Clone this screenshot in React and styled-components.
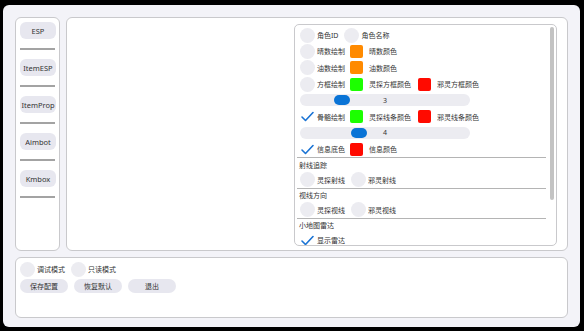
import React from 'react';
import styled, {createGlobalStyle} from 'styled-components';

const Global = createGlobalStyle`
    html, body { margin: 0; padding: 0; background: #000; }
    body {
        font-family: "Noto Sans", "Noto Sans CJK SC", sans-serif;
        font-size: 8px;
        color: #222;
    }
`;

const Window = styled.div`
    margin: 5px 0 0 3px;
    width: 577px;
    height: 322px;
    box-sizing: border-box;
    background: #f3f3f8;
    border-radius: 6px;
    padding: 12px 12px 9px 12px;
    display: flex;
    flex-direction: column;
    gap: 6px;
`;

const Top = styled.div`
    display: flex;
    gap: 6px;
    height: 234px;
`;

const Panel = styled.div`
    background: #fff;
    border: 1px solid #c9c9cc;
    border-radius: 6px;
    box-sizing: border-box;
`;

const Nav = styled(Panel)`
    width: 45px;
    padding: 4px 3px 0 4px;
    display: flex;
    flex-direction: column;
`;

const NavButton = styled.div`
    height: 17px;
    border-radius: 6px;
    background: #e7e7ef;
    display: flex;
    align-items: center;
    justify-content: center;
    font-size: 7.5px;
    color: #333;
    white-space: nowrap;
`;

const NavRule = styled.div`
    height: 2px;
    background: #a3a3a3;
    margin: 9px 1px 9px 0;
`;

const Content = styled(Panel)`
    flex: 1;
    display: flex;
    justify-content: flex-end;
    padding: 6px 10px 4px 0;
`;

const Box = styled.div`
    width: 263px;
    border: 1px solid #c9c9cc;
    border-radius: 5px;
    display: flex;
    box-sizing: border-box;
    overflow: hidden;
`;

const Scroll = styled.div`
    flex: 1;
    padding: 2px 0 0 2px;
`;

const ScrollTrack = styled.div`
    width: 8px;
    padding: 2px 0;
    display: flex;
    justify-content: center;
`;

const Thumb = styled.div`
    width: 4px;
    height: 173px;
    background: #c3c3c3;
    border-radius: 2px;
`;

const Row = styled.div`
    height: 16.3px;
    display: flex;
    align-items: center;
    padding-left: 3px;
    gap: ${p => p.$gap || 0}px;
`;

const GridRow = styled(Row)`
    display: grid;
    grid-template-columns: 50px 68px auto;
    align-items: center;
`;

const Item = styled.div`
    display: flex;
    align-items: center;
    white-space: nowrap;
`;

const Circle = styled.div`
    width: 15px;
    height: 15px;
    border-radius: 50%;
    background: #ececf1;
    margin-right: 2px;
    flex: none;
`;

const Check = styled.svg`
    width: 15px;
    height: 15px;
    margin-right: 2px;
    flex: none;
`;

const Swatch = styled.div`
    width: 13px;
    height: 13px;
    border-radius: 2px;
    background: ${p => p.$color};
    margin-right: 6px;
    flex: none;
`;

const Label = styled.span`
    font-size: 7px;
    color: #333;
`;

const Slider = styled.div`
    width: 170px;
    height: 12px;
    border-radius: 6px;
    background: #ececf1;
    position: relative;
    display: flex;
    align-items: center;
    justify-content: center;
    font-size: 7px;
    color: #333;
`;

const Knob = styled.div`
    position: absolute;
    top: 1px;
    width: 16px;
    height: 10px;
    border-radius: 5px;
    background: #0a74d6;
`;

const Rule = styled.div`
    height: 1px;
    background: #b4b4b4;
    margin: 0 2px 0 0;
`;

const Section = styled.div`
    height: 13px;
    display: flex;
    align-items: center;
    padding-left: 2px;
    font-size: 7px;
    color: #333;
`;

const Bottom = styled(Panel)`
    flex: 1;
    padding: 3px 4px;
    display: flex;
    flex-direction: column;
    gap: 2px;
`;

const Buttons = styled.div`
    display: flex;
    gap: 6px;
`;

const Button = styled.div`
    width: 48px;
    height: 14px;
    border-radius: 7px;
    background: #e7e7ef;
    display: flex;
    align-items: center;
    justify-content: center;
    font-size: 7px;
    color: #333;
`;

const Tick = () => (
    <Check viewBox="0 0 15 15">
        <path d="M2 8 L5.5 11.5 L13 3.5" fill="none" stroke="#1a73d4" strokeWidth="1.6" strokeLinecap="round" strokeLinejoin="round"/>
    </Check>
);

const Toggle = ({on, children}) => (
    <Item>{on ? <Tick/> : <Circle/>}<Label>{children}</Label></Item>
);

const Color = ({color, children}) => (
    <Item><Swatch $color={color}/><Label>{children}</Label></Item>
);

const Range = ({value}) => (
    <Row>
        <Slider>
            <Knob style={{left: ((value - 1) / 9) * 154}}/>
            {value}
        </Slider>
    </Row>
);

const ORANGE = '#ff8a00';
const GREEN = '#1cff00';
const RED = '#ff0a00';

const navs = ['ESP', 'ItemESP', 'ItemProp', 'Aimbot', 'Kmbox'];

export default function App() {
    return (
        <>
            <Global/>
            <Window>
                <Top>
                    <Nav>
                        {navs.map(n => (
                            <React.Fragment key={n}>
                                <NavButton>{n}</NavButton>
                                <NavRule/>
                            </React.Fragment>
                        ))}
                    </Nav>
                    <Content>
                        <Box>
                            <Scroll>
                                <Row $gap={6}>
                                    <Toggle>角色ID</Toggle>
                                    <Toggle>角色名称</Toggle>
                                </Row>
                                <GridRow>
                                    <Toggle>晴数绘制</Toggle>
                                    <Color color={ORANGE}>晴数颜色</Color>
                                </GridRow>
                                <GridRow>
                                    <Toggle>油数绘制</Toggle>
                                    <Color color={ORANGE}>油数颜色</Color>
                                </GridRow>
                                <GridRow>
                                    <Toggle>方框绘制</Toggle>
                                    <Color color={GREEN}>灵探方框颜色</Color>
                                    <Color color={RED}>邪灵方框颜色</Color>
                                </GridRow>
                                <Range value={3}/>
                                <GridRow>
                                    <Toggle on>骨骼绘制</Toggle>
                                    <Color color={GREEN}>灵探线条颜色</Color>
                                    <Color color={RED}>邪灵线条颜色</Color>
                                </GridRow>
                                <Range value={4}/>
                                <GridRow>
                                    <Toggle on>信息底色</Toggle>
                                    <Color color={RED}>信息颜色</Color>
                                </GridRow>
                                <Rule/>
                                <Section>射线追踪</Section>
                                <Row $gap={6}>
                                    <Toggle>灵探射线</Toggle>
                                    <Toggle>邪灵射线</Toggle>
                                </Row>
                                <Rule/>
                                <Section>视线方向</Section>
                                <Row $gap={6}>
                                    <Toggle>灵探视线</Toggle>
                                    <Toggle>邪灵视线</Toggle>
                                </Row>
                                <Rule/>
                                <Section>小地图雷达</Section>
                                <Row>
                                    <Toggle on>显示雷达</Toggle>
                                </Row>
                            </Scroll>
                            <ScrollTrack><Thumb/></ScrollTrack>
                        </Box>
                    </Content>
                </Top>
                <Bottom>
                    <Row $gap={6} style={{paddingLeft: 0}}>
                        <Toggle>调试模式</Toggle>
                        <Toggle>只读模式</Toggle>
                    </Row>
                    <Buttons>
                        <Button>保存配置</Button>
                        <Button>恢复默认</Button>
                        <Button>退出</Button>
                    </Buttons>
                </Bottom>
            </Window>
        </>
    );
}
